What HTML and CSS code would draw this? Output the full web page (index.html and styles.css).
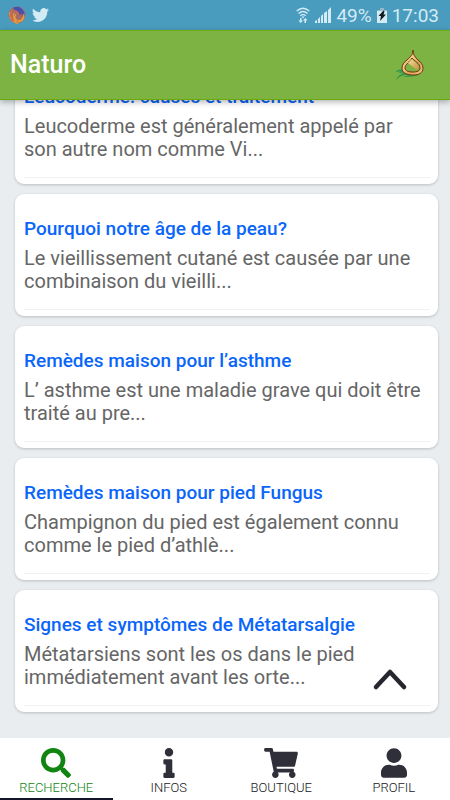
FILE: index.html
```html
<!DOCTYPE html>
<html lang="fr">
<head>
<meta charset="utf-8">
<meta name="viewport" content="width=device-width, initial-scale=1">
<title>Naturo</title>
<link rel="stylesheet" href="styles.css">
</head>
<body>
<div class="status">
  <div class="status-group">
    <svg width="18" height="18" viewBox="0 0 18 18" aria-hidden="true">
      <circle cx="9" cy="9" r="8.500" fill="#a86a62"/>
      <path d="M5 2Q10-1 14 3q4 4 2 9-2-2-2-5-2 3-4 2 1-2-1-3-2-1-4-4z" fill="#4650b0"/>
      <path d="M2 6q-1 9 7 11Q4 12 6 7M8 8q-3 5 2 7 5 0 6-7M10 16q6-1 6-6" fill="none" stroke="#e89a3c" stroke-width="1.300"/>
      <path d="M4 4q-3 6 1 11M6 5q4 0 5 4" fill="none" stroke="#d66a4a" stroke-width="1.300"/>
    </svg>
    <svg width="17" height="16" viewBox="0 2 24 20" aria-hidden="true"><path fill="#d3ebf5" d="M23.950 4.570a10 10 0 0 1-2.820.770 4.960 4.960 0 0 0 2.160-2.720c-.950.550-2 .950-3.120 1.180a4.920 4.920 0 0 0-8.390 4.490A13.980 13.980 0 0 1 1.640 3.160a4.920 4.920 0 0 0 1.520 6.570 4.900 4.900 0 0 1-2.230-.610v.060a4.920 4.920 0 0 0 3.950 4.830 5 5 0 0 1-2.210.080 4.940 4.940 0 0 0 4.600 3.420A9.870 9.870 0 0 1 0 19.540a14 14 0 0 0 7.550 2.210c9.050 0 14-7.500 14-13.980l-.020-.640a9.940 9.940 0 0 0 2.420-2.560z"/></svg>
  </div>
  <div class="status-group status-right">
    <svg width="14" height="17" viewBox="0 0 14 17" aria-hidden="true">
      <g fill="none" stroke="#d3ebf5" stroke-width="1.400"><path d="M.7 4Q7-1.500 13.300 4M2.500 6.500Q7 2.500 11.500 6.500M4.300 8.700Q7 6.500 9.700 8.700"/></g>
      <path d="M5.500 9.500h3L7 11.500zM4 11h1.500v2.500H7L4.700 16l-2.300-2.500H4zM8.500 16v-2.500H7L9.300 11l2.300 2.500H10V16z" fill="#d3ebf5"/>
    </svg>
    <svg width="16" height="16" viewBox="0 0 16 16" aria-hidden="true"><path fill="#d3ebf5" d="M0 16v-2l2-1v3zM3 16v-4l2-2v6zM6 16V9l2-2v9zM9 16V6l3-2v12zM13 16V3l3-3v16z"/></svg>
    <span class="battery">49%</span>
    <svg width="10" height="15" viewBox="0 0 10 15" aria-hidden="true"><path fill="#d3ebf5" d="M3 0h4v2h3v13H0V2h3z"/><path fill="#93b9c9" d="M3 0h4v2h3v1H0V2h3z"/><path d="M6.500 2.500 1.500 8H4l-1 5 6-6.500H6.500l1-3z" fill="#101820"/></svg>
    <time class="clock">17:03</time>
  </div>
</div>
<header class="appbar">
  <h1>Naturo</h1>
  <svg width="30" height="32" viewBox="0 0 30 32" aria-hidden="true">
    <defs>
      <linearGradient id="ring" x1="0" y1="0" x2="1" y2="1"><stop offset="0" stop-color="#b8752f"/><stop offset=".4" stop-color="#f5cf85"/><stop offset=".65" stop-color="#dc9f4c"/><stop offset="1" stop-color="#f8d78c"/></linearGradient>
      <linearGradient id="shine" x1="0" y1="0" x2="1" y2="1"><stop offset="0" stop-color="#f8dfa0"/><stop offset="1" stop-color="#c98d3e"/></linearGradient>
    </defs>
    <path d="M1 22q5-3 9-1 8 5 15 4-9 2-14 1-5 0-10 5 2-5 7-7-3-1-6 1 2-2 4-2-3-1-5 0z" fill="#35994d"/>
    <path d="M8 28q6-3 16-2-6 2-16 2z" fill="#399b45"/>
    <path fill="url(#ring)" stroke="#713419" stroke-width="1" d="M18 1c0 5 2 7 5 10 3 2 5 5 5 8 0 5-4 7-10 7S7 24 7 19c0-3 2-6 5-8 3-3 6-5 6-10z"/>
    <path fill="#7cb342" stroke="#713419" stroke-width="1" d="M17 9c2 3 8 5 8 10 0 3-3 4-7 4s-8-1-8-4c0-4 5-6 7-10z"/>
    <path d="M17 10c2 3 7 5 7 9l-2 2-9-7 4-4z" fill="url(#shine)"/>
  </svg>
</header>
<main class="feed">
  <article class="card"><h2><a href="#">Leucoderme: causes et traitement</a></h2><p>Leucoderme est généralement appelé par son autre nom comme Vi...</p></article>
  <article class="card"><h2><a href="#">Pourquoi notre âge de la peau?</a></h2><p>Le vieillissement cutané est causée par une combinaison du vieilli...</p></article>
  <article class="card"><h2><a href="#">Remèdes maison pour l’asthme</a></h2><p>L’ asthme est une maladie grave qui doit être traité au pre...</p></article>
  <article class="card"><h2><a href="#">Remèdes maison pour pied Fungus</a></h2><p>Champignon du pied est également connu comme le pied d’athlè...</p></article>
  <article class="card"><h2><a href="#">Signes et symptômes de Métatarsalgie</a></h2><p>Métatarsiens sont les os dans le pied immédiatement avant les orte...</p></article>
  <button class="to-top" type="button" aria-label="Haut de page"><svg width="36" height="24" viewBox="0 0 36 24" aria-hidden="true"><path d="m4 20 14-15 14 15" fill="none" stroke="#26262f" stroke-width="4.500" stroke-linecap="round" stroke-linejoin="round"/></svg></button>
</main>
<nav class="tabs">
  <a class="tab active" href="#"><svg width="30" height="30" viewBox="0 0 512 512" aria-hidden="true"><path fill="currentColor" d="M505 442.700 405.300 343c-4.500-4.500-10.600-7-17-7H372c27.600-35.300 44-79.700 44-128C416 93.100 322.900 0 208 0S0 93.100 0 208s93.100 208 208 208c48.300 0 92.700-16.400 128-44v16.300c0 6.400 2.500 12.500 7 17l99.700 99.700c9.400 9.400 24.600 9.400 33.900 0l28.300-28.300c9.400-9.400 9.400-24.600.1-34zM208 336c-70.700 0-128-57.200-128-128 0-70.700 57.200-128 128-128 70.700 0 128 57.200 128 128 0 70.700-57.200 128-128 128z"/></svg><span>RECHERCHE</span></a>
  <a class="tab" href="#"><svg width="12" height="30" viewBox="0 0 192 512" aria-hidden="true"><path fill="#2f2f3a" d="M20 424.200h20V279.800H20c-11 0-20-9-20-20V212c0-11 9-20 20-20h112c11 0 20 9 20 20v212.200h20c11 0 20 9 20 20V492c0 11-9 20-20 20H20c-11 0-20-9-20-20v-47.800c0-11 9-20 20-20zM96 0C56.200 0 24 32.200 24 72s32.200 72 72 72 72-32.200 72-72S135.800 0 96 0z"/></svg><span>INFOS</span></a>
  <a class="tab" href="#"><svg width="34" height="30" viewBox="0 0 576 512" aria-hidden="true"><path fill="#2f2f3a" d="m528.100 301.300 47.300-208C578.800 78.300 567.400 64 552 64H159.200l-9.200-44.800C147.800 8 137.900 0 126.500 0H24C10.700 0 0 10.700 0 24v16c0 13.300 10.700 24 24 24h69.900l70.200 343.400C147.300 417.100 136 435.200 136 456c0 30.900 25.100 56 56 56s56-25.100 56-56c0-15.700-6.400-29.800-16.800-40h209.600C430.400 426.200 424 440.300 424 456c0 30.900 25.100 56 56 56s56-25.100 56-56c0-22.200-12.900-41.300-31.600-50.400l5.500-24.300c3.400-15-8-29.300-23.400-29.300H218.100l-6.500-32h293.100c11.200 0 20.900-7.800 23.400-18.700z"/></svg><span>BOUTIQUE</span></a>
  <a class="tab" href="#"><svg width="26" height="30" viewBox="0 0 448 512" aria-hidden="true"><path fill="#2f2f3a" d="M224 256c70.700 0 128-57.300 128-128S294.700 0 224 0 96 57.300 96 128s57.300 128 128 128zm89.600 32h-16.700c-22.200 10.200-46.900 16-72.900 16s-50.600-5.800-72.900-16h-16.700C60.200 288 0 348.200 0 422.400V464c0 26.500 21.500 48 48 48h352c26.500 0 48-21.500 48-48v-41.600c0-74.200-60.200-134.400-134.400-134.400z"/></svg><span>PROFIL</span></a>
</nav>
</body>
</html>
```
FILE: styles.css
```css
* { box-sizing: border-box; }
body {
  margin: 0;
  height: 100vh;
  display: flex;
  flex-direction: column;
  overflow: hidden;
  background: #e9edf0;
  font-family: Roboto, "Liberation Sans", sans-serif;
}
.status {
  flex: none;
  display: flex;
  justify-content: space-between;
  padding: 0 11px 0 8px;
  height: 30px;
  background: #4a9cbe;
  color: #d3ebf5;
}
.status-group { display: flex; align-items: center; gap: 6px; }
.status-right { gap: 5px; }
.battery, .clock { font-size: 19px; line-height: 30px; padding-top: 2px; }
.appbar {
  flex: none;
  display: flex;
  align-items: center;
  justify-content: space-between;
  height: 70px;
  padding: 0 25px 0 10px;
  background: #7cb342;
  border-top: 1px solid #6fae10;
  border-bottom: 1px solid #6aaa08;
  color: #fff;
  box-shadow: 0 2px 6px rgba(0, 0, 0, 0.3);
  z-index: 1;
}
.appbar h1 { margin: 0; font-size: 25px; line-height: 28px; font-weight: 500; }
.feed {
  position: relative;
  flex: 1;
  min-height: 0;
  overflow: hidden;
  display: flex;
  flex-direction: column;
  justify-content: flex-end;
  gap: 10px;
  padding: 0 12px 26px 15px;
}
.card {
  flex: none;
  padding: 24px 8px 6px 9px;
  border-radius: 9px;
  background: #fff;
  box-shadow: 0 1px 3px rgba(0, 0, 0, 0.2);
}
.card h2 { margin: 0 0 7px; font-size: 19px; line-height: 22px; font-weight: 500; }
.card a { color: #0a66fa; text-decoration: none; }
.card p {
  margin: 0;
  padding-bottom: 16px;
  border-bottom: 1px solid #f1f1f2;
  font-size: 20px;
  line-height: 23px;
  color: #666;
}
.to-top {
  position: absolute;
  right: 35px;
  bottom: 35px;
  width: 50px;
  height: 48px;
  padding: 0;
  display: grid;
  place-items: center;
  border: 0;
  background: none;
}
.tabs {
  flex: none;
  display: grid;
  grid-template-columns: repeat(4, 1fr);
  background: #fff;
}
.tab {
  display: flex;
  flex-direction: column;
  align-items: center;
  gap: 2px;
  padding: 10px 0 2px;
  border-bottom: 2px solid transparent;
  color: #17171b;
  font-size: 13px;
  font-weight: 300;
  line-height: 16px;
  text-decoration: none;
}
.tab.active { color: #128412; border-bottom-color: #15152a; }
```
